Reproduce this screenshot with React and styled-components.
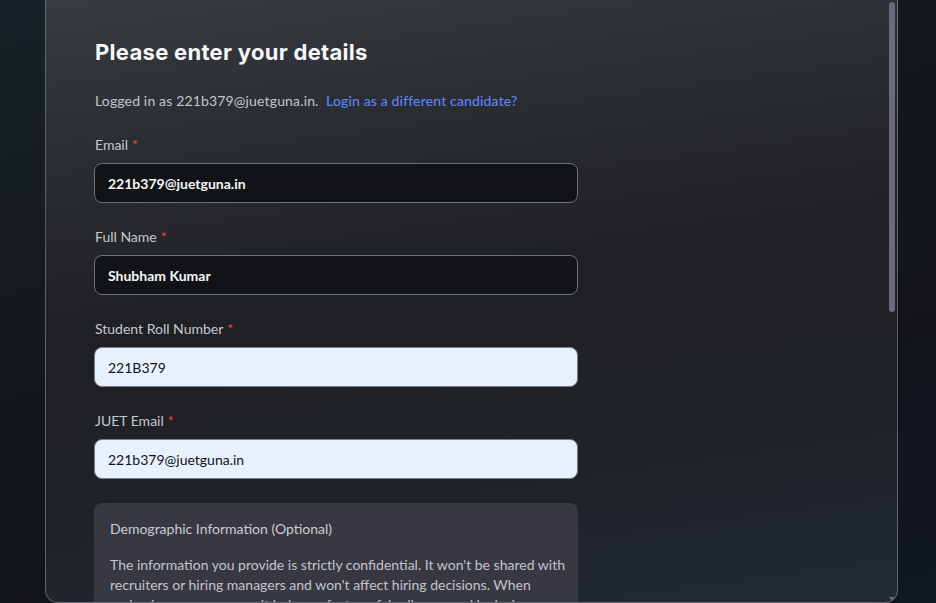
import React from "react";
import styled, { createGlobalStyle } from "styled-components";

const GlobalStyle = createGlobalStyle`
  html, body {
    margin: 0;
    padding: 0;
    height: 100%;
    overflow: hidden;
  }

  body {
    background: linear-gradient(160deg, #172125 0%, #141719 45%, #121419 70%, #111821 100%);
    font-family: Lato, "Liberation Sans", sans-serif;
  }
`;

const Page = styled.div`
  display: flex;
  height: 603px;
  padding: 0 38px 0 45px;
  box-sizing: border-box;
`;

const Card = styled.div`
  position: relative;
  flex: 1;
  height: 602px;
  border: 1px solid rgba(170, 176, 186, 0.45);
  border-top: none;
  border-radius: 0 0 13px 13px;
  overflow: hidden;
  background: linear-gradient(172deg, #373c40 0%, #2a2d31 22%, #1f2024 48%, #1f2226 72%, #212a33 100%);
`;

const ScrollArea = styled.div`
  height: 100%;
  overflow-y: auto;
  scrollbar-width: none;

  &::-webkit-scrollbar {
    display: none;
  }
`;

const Content = styled.div`
  padding: 38px 48px 60px 48px;
  width: 484px;
`;

const Title = styled.h1`
  margin: 0 0 0 1px;
  font-family: Inter, Lato, sans-serif;
  font-size: 22px;
  line-height: 28px;
  font-weight: 700;
  color: #f6f7f9;
  letter-spacing: 0.3px;
`;

const LoggedIn = styled.p`
  margin: 25px 0 24px 1px;
  font-size: 14px;
  line-height: 20px;
  color: #c3c6cc;
  white-space: pre;
  letter-spacing: 0.15px;
`;

const Link = styled.a`
  color: #5d84f4;
  text-decoration: none;
  font-weight: 500;
`;

const Field = styled.div`
  display: flex;
  flex-direction: column;
  gap: 8px;
  margin-bottom: 24px;
`;

const Label = styled.label`
  font-size: 14px;
  line-height: 20px;
  color: #c6c9cf;
  padding-left: 1px;
`;

const Required = styled.span`
  color: #e5484d;
  margin-left: 4px;
`;

const Input = styled.input`
  box-sizing: border-box;
  height: 40px;
  width: 100%;
  padding: 0 13px;
  border-radius: 8px;
  border: 1px solid ${(p) => (p.$filled ? "#7a7e88" : "#6d717a")};
  background: ${(p) => (p.$filled ? "#e8f0fe" : "#121317")};
  color: ${(p) => (p.$filled ? "#121212" : "#f5f6f8")};
  font-family: inherit;
  font-size: 14px;
  font-weight: ${(p) => (p.$filled ? 400 : 700)};
  outline: none;
`;

const InfoBox = styled.section`
  background: #383841;
  border-radius: 8px;
  padding: 16px 12px 16px 16px;
`;

const InfoTitle = styled.h2`
  margin: 0 0 16px;
  font-size: 14px;
  line-height: 20px;
  font-weight: 400;
  color: #cbcdd3;
`;

const InfoText = styled.p`
  margin: 0 0 16px;
  font-size: 14px;
  line-height: 20px;
  color: #c3c5cb;
`;

const Thumb = styled.div`
  position: absolute;
  top: 2px;
  right: 2px;
  width: 6px;
  height: 310px;
  border-radius: 3px;
  background: #6b6a7b;
`;

const Arrow = styled.div`
  position: absolute;
  right: 2px;
  bottom: 1px;
  width: 0;
  height: 0;
  border-left: 3px solid transparent;
  border-right: 3px solid transparent;
  border-top: 4px solid #6b6a7b;
`;

const fields = [
  { label: "Email", value: "221b379@juetguna.in" },
  { label: "Full Name", value: "Shubham Kumar" },
  { label: "Student Roll Number", value: "221B379", filled: true },
  { label: "JUET Email", value: "221b379@juetguna.in", filled: true },
];

export default function App() {
  return (
    <>
      <GlobalStyle />
      <Page>
        <Card>
          <ScrollArea>
            <Content>
              <Title>Please enter your details</Title>
              <LoggedIn>
                Logged in as 221b379@juetguna.in.{"  "}
                <Link href="#">Login as a different candidate?</Link>
              </LoggedIn>
              {fields.map((f) => (
                <Field key={f.label}>
                  <Label>
                    {f.label}
                    <Required>*</Required>
                  </Label>
                  <Input $filled={f.filled} defaultValue={f.value} readOnly />
                </Field>
              ))}
              <InfoBox>
                <InfoTitle>Demographic Information (Optional)</InfoTitle>
                <InfoText>
                  The information you provide is strictly confidential. It won't be shared with
                  recruiters or hiring managers and won't affect hiring decisions. When
                  reviewing your answers, it helps us foster a fair, diverse and inclusive hiring
                  process for every candidate.
                </InfoText>
                <InfoText>
                  You may choose to skip any of these questions.
                </InfoText>
              </InfoBox>
            </Content>
          </ScrollArea>
          <Thumb />
          <Arrow />
        </Card>
      </Page>
    </>
  );
}
